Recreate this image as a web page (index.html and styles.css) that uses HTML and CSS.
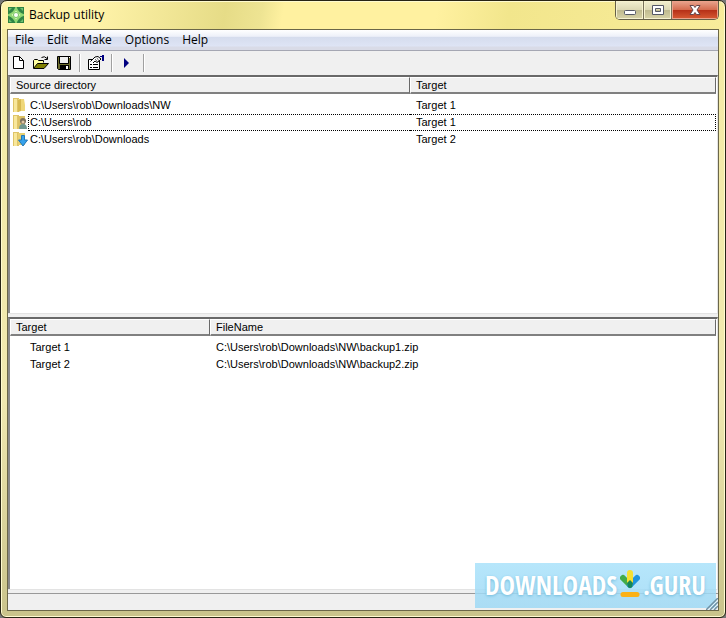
FILE: index.html
```html
<!DOCTYPE html>
<html lang="en">
<head>
<meta charset="utf-8">
<title>Backup utility</title>
<link rel="stylesheet" href="styles.css">
</head>
<body>
<div class="window">
  <header class="titlebar">
    <svg class="app-icon" viewBox="0 0 16 16" aria-hidden="true">
      <defs><radialGradient id="leaf"><stop offset="0" stop-color="#fff"/><stop offset=".4" stop-color="#e8ffd0"/><stop offset=".7" stop-color="#a9e67c"/><stop offset="1" stop-color="#6fc45c"/></radialGradient></defs>
      <rect width="16" height="16" fill="#2f8444"/>
      <path d="M8 1Q10 6 15 8 10 10 8 15 6 10 1 8 6 6 8 1Z" fill="url(#leaf)" stroke="#8fd873" stroke-width="2"/>
      <path d="M1 1h3L1 4ZM15 1v3l-3-3ZM1 15v-3l3 3ZM15 15h-3l3-3Z" fill="#6fc070"/>
      <circle cx="8" cy="8" r="3" fill="#7cc66a"/><circle cx="8" cy="8" r="2" fill="#fff"/>
    </svg>
    <h1 class="title">Backup utility</h1>
    <div class="controls">
      <button class="control" type="button" aria-label="Minimize"><svg width="14" height="12" viewBox="0 0 14 12"><rect x="1.5" y="6.500" width="11" height="4" rx="1" fill="#fff" stroke="#555866"/></svg></button>
      <button class="control" type="button" aria-label="Maximize"><svg width="14" height="12" viewBox="0 0 14 12"><path d="M1.500 1.500h11v9h-11ZM4.500 4.500v3h5v-3Z" fill="#fff" fill-rule="evenodd" stroke="#555866"/></svg></button>
      <button class="control close" type="button" aria-label="Close"><svg width="14" height="12" viewBox="0 0 14 12"><path d="M2 1.500h3.500L7 3.500l1.500-2H12L9 6l3 4.500H8.500L7 8.500l-1.500 2H2L5 6Z" fill="#fff" stroke="#65464a"/></svg></button>
    </div>
  </header>
  <main class="client">
    <nav class="menubar">
      <button type="button">File</button><button type="button">Edit</button><button type="button">Make</button><button type="button">Options</button><button type="button">Help</button>
    </nav>
    <div class="toolbar">
      <button type="button" aria-label="New"><svg width="16" height="16" viewBox="0 0 16 16"><path d="M3.500 1.500h6l4 4v8h-10Z" fill="#fff" stroke="#000"/><path d="M9.500 1.500v4h4" fill="none" stroke="#000"/></svg></button>
      <button type="button" aria-label="Open"><svg width="16" height="16" viewBox="0 0 16 16"><path d="M.5 13V5.500l1-1h3l1 1h5v2" fill="#ffffa0" stroke="#000"/><path d="M.5 13.500 4.500 8.500h11l-4.500 5Z" fill="#808000" stroke="#000"/><path d="M8.500 2.500q3-2 5.500 1M14.500 1.500v3H11.500" fill="none" stroke="#000"/></svg></button>
      <button type="button" aria-label="Save"><svg width="16" height="16" viewBox="0 0 16 16"><path d="M1.500 1.500h13v13h-12l-1-1Z" fill="#6c6c2c" stroke="#000"/><path d="M4 2h8v6H4Z" fill="#f0f0f0"/><path d="M3.500 2v6.500h9V2" fill="none" stroke="#000"/><path d="M4 10h9v4H4Z" fill="#000"/><path d="M10 11h2v3h-2ZM13 2h1v1h-1Z" fill="#fff"/></svg></button>
      <span class="separator"></span>
      <button type="button" aria-label="Properties"><svg width="16" height="16" viewBox="0 0 16 16"><path d="M.5 4.500h11v10H.5Z" fill="#fff" stroke="#000"/><path d="M2 9.500h2M5 9.500h5M2 12.500h2M5 12.500h5" stroke="#000"/><path d="M2.500 6.500 7 2l3-.500 3 2.500-2 2-2 1.500L7 6 5 8" fill="#fff" stroke="#000"/><path d="m7 4 3 3M9 3l2 3" stroke="#777"/><path d="M12 1h2v1h-2ZM14 0h2v6h-2Z" fill="#000080"/></svg></button>
      <span class="separator"></span>
      <button type="button" aria-label="Run"><svg width="16" height="16" viewBox="0 0 16 16"><path d="M4 3v10l5-5Z" fill="#000080"/></svg></button>
      <span class="separator"></span>
    </div>
    <section class="list sources">
      <table>
        <colgroup><col class="source-col"><col></colgroup>
        <thead><tr><th scope="col">Source directory</th><th scope="col">Target</th></tr></thead>
        <tbody>
          <tr><td><span class="item"><svg class="folder" width="16" height="16" viewBox="0 0 16 16"><path d="M1 1h6v14H1Z" fill="#dfc468"/><path d="M2 2h3v13H2Z" fill="#f8e79b"/><path d="M6 2h6l1 6v6H6Z" fill="#efd779"/><path d="m6 3 3-1v12l-3 1Z" fill="#d7b951"/></svg><span>C:\Users\rob\Downloads\NW</span></span></td><td>Target 1</td></tr>
          <tr class="focused"><td><span class="item"><svg class="folder" width="16" height="16" viewBox="0 0 16 16"><path d="M1 1h6v14H1Z" fill="#dfc468"/><path d="M2 2h3v13H2Z" fill="#f8e79b"/><path d="M6 2h7v12H6Z" fill="#dcc164"/><path d="M7 15q0-5 4-5t4 5Z" fill="#719791"/><circle cx="11" cy="7" r="3" fill="#7d705e"/><circle cx="11" cy="8" r="1.500" fill="#e2c5a5"/></svg><span>C:\Users\rob</span></span></td><td>Target 1</td></tr>
          <tr><td><span class="item"><svg class="folder" width="16" height="16" viewBox="0 0 16 16"><path d="M1 1h6v14H1Z" fill="#dfc468"/><path d="M2 2h3v13H2Z" fill="#f8e79b"/><path d="M6 2h7v12H6Z" fill="#e8cf70"/><path d="M9.500 4.500h3V9H15.500L11 15 6.500 9h3Z" fill="#36a2ec" stroke="#2477b5"/></svg><span>C:\Users\rob\Downloads</span></span></td><td>Target 2</td></tr>
        </tbody>
      </table>
    </section>
    <div class="splitter"></div>
    <section class="list targets">
      <table>
        <colgroup><col class="target-col"><col></colgroup>
        <thead><tr><th scope="col">Target</th><th scope="col">FileName</th></tr></thead>
        <tbody>
          <tr><td class="indented">Target 1</td><td>C:\Users\rob\Downloads\NW\backup1.zip</td></tr>
          <tr><td class="indented">Target 2</td><td>C:\Users\rob\Downloads\NW\backup2.zip</td></tr>
        </tbody>
      </table>
    </section>
    <footer class="statusbar"></footer>
    <div class="watermark">
      <span>DOWNLOADS</span>
      <svg width="20" height="28" viewBox="0 0 20 28" aria-hidden="true"><path d="M3 9l7 7" stroke="#41ac49" stroke-width="6" stroke-linecap="round"/><path d="M17 9l-7 7" stroke="#2094dc" stroke-width="6" stroke-linecap="round"/><path d="M10 4v9" stroke="#f5df31" stroke-width="6" stroke-linecap="round"/><path d="m7 14 3-3 3 3-1 4q-2 2-4 0Z" fill="#168757"/><path d="M3 25.500h14" stroke="#fbb116" stroke-width="5" stroke-linecap="round"/></svg>
      <span>.GURU</span>
    </div>
    <svg class="grip" width="12" height="12" viewBox="0 0 12 12" aria-hidden="true"><path d="M0 12 12 0M4 12l8-8M8 12l4-4" stroke="#6f91a5" stroke-width="1.500"/><path d="M2 12 12 2M6 12l6-6" stroke="#e3f5fc"/></svg>
  </main>
</div>
</body>
</html>
```
FILE: styles.css
```css
* { box-sizing: border-box; }

body {
  margin: 0;
  background: #777;
  color: #000;
  font: 11px/16px "Liberation Sans", Arial, sans-serif;
}

button {
  padding: 0;
  border: 0;
  background: none;
  color: inherit;
  font: inherit;
}

.window {
  display: flex;
  flex-direction: column;
  height: 100vh;
  padding: 0 6px 6px;
  border: 1px solid #282414;
  border-radius: 7px 7px 6px 6px;
  background:
    linear-gradient(100deg, #fff3a9 0 13%, #e6dc87 31%, #eee493 36%, #fff1a0 39% 60%, #f2e68c 70%, #f8ec9b) top / 100% 28px no-repeat,
    linear-gradient(#f5eca4, #f0e8b0 65%, #c9c38b);
  box-shadow: inset 0 0 0 1px #fffbd0;
}

.titlebar {
  display: flex;
  flex: none;
  height: 28px;
}

.app-icon {
  width: 16px;
  height: 16px;
  margin: 6px 5px 0 1px;
}

.title {
  flex: 1;
  margin: 0;
  font: 12px/28px "Open Sans", sans-serif;
}

.controls {
  display: flex;
  height: 19px;
  border: 1px solid #655f47;
  border-top: 0;
  border-radius: 0 0 5px 5px;
  overflow: hidden;
}

.control {
  display: flex;
  width: 28px;
  align-items: center;
  justify-content: center;
  border-right: 1px solid #77715a;
  background: linear-gradient(#f2efd0, #ddd9b5 48%, #beb98f 50%, #d8d3a7);
  box-shadow: inset 0 0 0 1px #f6f2d0;
}

.control.close {
  width: 46px;
  border: 0;
  background: linear-gradient(#e9a58f, #d56d50 48%, #b52f17 50%, #d85b34);
  box-shadow: inset 0 0 0 1px #eba18a;
}

.client {
  position: relative;
  display: flex;
  flex: 1;
  flex-direction: column;
  min-height: 0;
  border: 1px solid #6b6749;
  background: #f0f0f0;
}

.menubar {
  display: flex;
  flex: none;
  gap: 13px;
  height: 21px;
  padding-left: 7px;
  border-bottom: 1px solid #a5a7b3;
  background: linear-gradient(#fff, #edf0f9 32%, #d5dced 35%, #dee4f5 80%, #d9dbe7 85%);
  font: 12px/20px "Open Sans", sans-serif;
}

.toolbar {
  display: flex;
  flex: none;
  align-items: center;
  gap: 7px;
  height: 24px;
  padding-left: 2px;
}

.toolbar button { height: 16px; }
.toolbar svg { display: block; }

.separator {
  width: 2px;
  height: 18px;
  border-left: 1px solid #a0a0a0;
  border-right: 1px solid #fff;
}

.list {
  min-height: 0;
  padding-right: 1px;
  border: solid;
  border-width: 2px 1px 0 2px;
  border-color: #696969 #e3e3e3 #e3e3e3 #8a8a8a;
  background: #fff;
  overflow: hidden;
}

.sources { flex: 238 1 0; }
.targets { flex: 272 1 0; }

.list table {
  width: 100%;
  table-layout: fixed;
  border-collapse: separate;
  border-spacing: 0;
}

.source-col { width: 400px; }
.target-col { width: 200px; }

th {
  height: 17px;
  padding: 1px 5px 0;
  border: solid;
  border-width: 1px 1px 2px;
  border-color: #fff #696969 #808080 #fff;
  background: #f0f0f0;
  font-weight: 400;
  line-height: 13px;
  text-align: left;
}

tbody::before {
  content: "";
  display: block;
  height: 3px;
}

td {
  height: 17px;
  padding: 0 6px;
  line-height: 17px;
}

td:first-child { padding: 0 0 0 2px; }
td.indented:first-child { padding-left: 20px; }

.item { display: flex; }
.item span { flex: 1; padding-left: 2px; }
.folder { flex: none; }

.focused span span,
.focused td:last-child {
  border: 1px dotted #000;
  border-width: 1px 0;
  line-height: 15px;
}

.focused span span {
  padding-left: 1px;
  border-left-width: 1px;
}

.focused td:last-child { border-right-width: 1px; }

.splitter {
  flex: none;
  height: 4px;
  border-top: 1px solid #e3e3e3;
}

.statusbar {
  flex: none;
  height: 21px;
  padding-top: 3px;
  border-top: 1px solid #e3e3e3;
}

.statusbar::before {
  content: "";
  display: block;
  border-top: 1px solid #999;
}

.watermark {
  position: absolute;
  right: 2px;
  bottom: 2px;
  display: flex;
  align-items: center;
  justify-content: center;
  gap: 3px;
  width: 241px;
  height: 45px;
  background: linear-gradient(rgba(164, 224, 250, .8), rgba(158, 217, 245, .85));
  color: #fff;
  font: 700 26px/45px "Open Sans Condensed", "Liberation Sans Narrow", "Open Sans", sans-serif;
  text-shadow: 0 1px 3px #72bcdc;
}

.watermark svg { margin-top: -5px; }

.grip {
  position: absolute;
  right: 0;
  bottom: 0;
}
```
